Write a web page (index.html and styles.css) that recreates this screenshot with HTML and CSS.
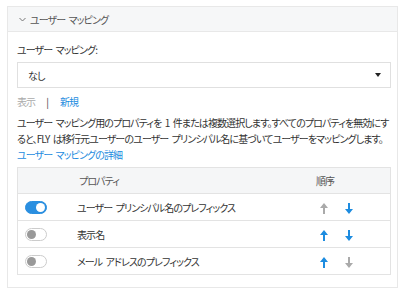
FILE: index.html
```html
<!DOCTYPE html>
<html lang="ja">
<head>
    <meta charset="UTF-8">
    <title>ユーザー マッピング</title>
    <link rel="stylesheet" href="styles.css">
</head>
<body>
    <div class="panel">
        <div class="panel-header">
            <svg class="chevron" width="7" height="5" viewBox="0 0 7 5"><path d="M0.5 1 L3.5 4 L6.5 1" fill="none" stroke="#777" stroke-width="1"/></svg>
            <span>ユーザー マッピング</span>
        </div>
        <div class="panel-body">
            <label class="field-label">ユーザー マッピング:</label>
            <div class="select">
                <span>なし</span>
                <span class="caret"></span>
            </div>
            <div class="actions">
                <span class="disabled">表示</span>
                <span class="sep">|</span>
                <a href="#" class="link">新規</a>
            </div>
            <p class="description">
                ユーザー マッピング用のプロパティを 1 件または複数選択します。すべてのプロパティを無効にすると、FLY は移行元ユーザーのユーザー プリンシパル名に基づいてユーザーをマッピングします。 <a href="#" class="link">ユーザー マッピングの詳細</a>
            </p>
            <table class="props">
                <thead>
                    <tr>
                        <th class="col-toggle"></th>
                        <th class="col-name">プロパティ</th>
                        <th class="col-order">順序</th>
                    </tr>
                </thead>
                <tbody>
                    <tr>
                        <td class="col-toggle"><span class="toggle on"></span></td>
                        <td class="col-name">ユーザー プリンシパル名のプレフィックス</td>
                        <td class="col-order">
                            <svg class="arrow" width="8" height="11" viewBox="0 0 8 11"><path d="M4 0 L8 5 L5 5 L5 11 L3 11 L3 5 L0 5 Z" fill="#aaa"/></svg>
                            <svg class="arrow" width="8" height="11" viewBox="0 0 8 11"><path d="M4 11 L8 6 L5 6 L5 0 L3 0 L3 6 L0 6 Z" fill="#1d8ce0"/></svg>
                        </td>
                    </tr>
                    <tr>
                        <td class="col-toggle"><span class="toggle"></span></td>
                        <td class="col-name">表示名</td>
                        <td class="col-order">
                            <svg class="arrow" width="8" height="11" viewBox="0 0 8 11"><path d="M4 0 L8 5 L5 5 L5 11 L3 11 L3 5 L0 5 Z" fill="#1d8ce0"/></svg>
                            <svg class="arrow" width="8" height="11" viewBox="0 0 8 11"><path d="M4 11 L8 6 L5 6 L5 0 L3 0 L3 6 L0 6 Z" fill="#1d8ce0"/></svg>
                        </td>
                    </tr>
                    <tr>
                        <td class="col-toggle"><span class="toggle"></span></td>
                        <td class="col-name">メール アドレスのプレフィックス</td>
                        <td class="col-order">
                            <svg class="arrow" width="8" height="11" viewBox="0 0 8 11"><path d="M4 0 L8 5 L5 5 L5 11 L3 11 L3 5 L0 5 Z" fill="#1d8ce0"/></svg>
                            <svg class="arrow" width="8" height="11" viewBox="0 0 8 11"><path d="M4 11 L8 6 L5 6 L5 0 L3 0 L3 6 L0 6 Z" fill="#aaa"/></svg>
                        </td>
                    </tr>
                </tbody>
            </table>
        </div>
    </div>
</body>
</html>
```

FILE: styles.css
```css
body {
    margin: 0;
    padding: 6px 0 0 7px;
    font-family: "Noto Sans CJK JP", "Noto Sans", sans-serif;
    font-size: 10px;
    letter-spacing: -0.9px;
    word-spacing: 2px;
    font-feature-settings: "palt";
    color: #333;
    background: #fff;
}
.panel {
    width: 389px;
    border: 1px solid #e8e8e8;
    padding-bottom: 12px;
}
.panel-header {
    display: flex;
    align-items: center;
    height: 24px;
    padding-left: 11px;
    background-color: #f6f7f8;
    border-bottom: 1px solid #e8e8e8;
    color: #555;
}
.chevron {
    margin-right: 4px;
}
.panel-body {
    padding: 10px 6px 0 9px;
}
.field-label {
    display: block;
    line-height: 16px;
    margin-bottom: 4px;
}
.select {
    display: flex;
    align-items: center;
    justify-content: space-between;
    height: 24px;
    padding: 0 9px 0 10px;
    border: 1px solid #e0e0e0;
}
.caret {
    width: 0;
    height: 0;
    border-left: 3px solid transparent;
    border-right: 3px solid transparent;
    border-top: 4px solid #222;
}
.actions {
    display: flex;
    align-items: center;
    line-height: 16px;
    margin-top: 6px;
}
.disabled {
    color: #aaa;
}
.sep {
    margin: 0 12px 0 11px;
    color: #444;
}
.link {
    color: #1d8ce0;
    text-decoration: none;
}
.description {
    margin: 5px 0 0;
    line-height: 16px;
}
.props {
    width: 374px;
    margin-top: 4px;
    border-collapse: collapse;
    border: 1px solid #e3e3e3;
}
.props th {
    height: 25px;
    background-color: #f5f6f7;
    font-weight: normal;
    color: #555;
    text-align: left;
}
.props td {
    height: 26px;
    border-top: 1px solid #e3e3e3;
}
.props th, .props td {
    padding: 0;
}
.col-toggle {
    width: 52px;
    padding-left: 7px !important;
}
th.col-name {
    padding-left: 2px !important;
}
.col-order {
    width: 74px;
    white-space: nowrap;
}
th.col-order {
    padding-left: 2px !important;
}
.arrow {
    vertical-align: middle;
    margin-left: 6px;
    margin-right: 8px;
}
.toggle {
    display: block;
    position: relative;
    width: 20px;
    height: 11px;
    border: 1px solid #ccc;
    border-radius: 7px;
    background: #fff;
    box-sizing: content-box;
}
.toggle::after {
    content: "";
    position: absolute;
    top: 1px;
    left: 1px;
    width: 9px;
    height: 9px;
    border-radius: 50%;
    background: #999;
}
.toggle.on {
    background: #2a8fe0;
    border-color: #2a8fe0;
}
.toggle.on::after {
    left: 10px;
    background: #fff;
}
```
